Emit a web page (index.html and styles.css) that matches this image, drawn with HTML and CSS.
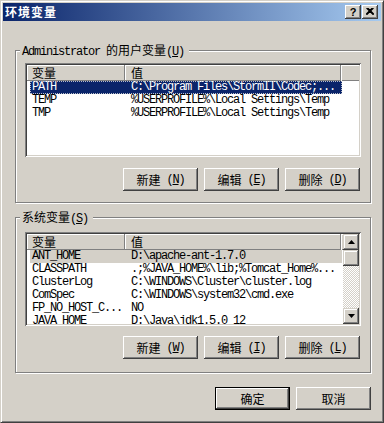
FILE: index.html
```html
<!DOCTYPE html>
<html>
<head>
<meta charset="utf-8">
<link rel="stylesheet" href="styles.css">
</head>
<body>
<div class="window">
  <div class="titlebar">
    <span class="title c">环境变量</span>
    <div class="tbtns">
      <div class="tbtn help">?</div>
      <div class="tbtn close"><svg width="8" height="7" viewBox="0 0 8 7"><path d="M0.5 0 L7.5 7 M1.8 0 L8 6.2 M7.5 0 L0.5 7 M6.2 0 L0 6.2" stroke="#000" stroke-width="1.1" fill="none"/></svg></div>
    </div>
  </div>
  <div class="content">
    <div class="group g1">
      <div class="legend">Administrator <span class="c">的用户变量</span>(<u>U</u>)</div>
      <div class="listview lv1">
        <div class="lv-main">
          <div class="header">
            <div class="hcell hk"><span class="c">变量</span></div>
            <div class="hcell hv"><span class="c">值</span></div>
            <div class="hfill"></div>
          </div>
          <div class="row sel"><div class="cell k">PATH</div><div class="cell v">C:\Program Files\StormII\Codec;...</div></div>
          <div class="row"><div class="cell k">TEMP</div><div class="cell v">%USERPROFILE%\Local Settings\Temp</div></div>
          <div class="row"><div class="cell k">TMP</div><div class="cell v">%USERPROFILE%\Local Settings\Temp</div></div>
        </div>
      </div>
      <div class="btnrow">
        <button class="btn"><span class="c">新建</span>&nbsp;(<u>N</u>)</button>
        <button class="btn"><span class="c">编辑</span>&nbsp;(<u>E</u>)</button>
        <button class="btn"><span class="c">删除</span>&nbsp;(<u>D</u>)</button>
      </div>
    </div>

    <div class="group g2">
      <div class="legend"><span class="c">系统变量</span>(<u>S</u>)</div>
      <div class="listview lv2">
        <div class="lv-main">
          <div class="header">
            <div class="hcell hk"><span class="c">变量</span></div>
            <div class="hcell hv"><span class="c">值</span></div>
            <div class="hfill"></div>
          </div>
          <div class="row inact"><div class="cell k">ANT_HOME</div><div class="cell v">D:\apache-ant-1.7.0</div></div>
          <div class="row"><div class="cell k">CLASSPATH</div><div class="cell v">.;%JAVA_HOME%\lib;%Tomcat_Home%...</div></div>
          <div class="row"><div class="cell k">ClusterLog</div><div class="cell v">C:\WINDOWS\Cluster\cluster.log</div></div>
          <div class="row"><div class="cell k">ComSpec</div><div class="cell v">C:\WINDOWS\system32\cmd.exe</div></div>
          <div class="row"><div class="cell k">FP_NO_HOST_C...</div><div class="cell v">NO</div></div>
          <div class="row"><div class="cell k">JAVA_HOME</div><div class="cell v">D:\Java\jdk1.5.0_12</div></div>
        </div>
        <div class="scrollbar">
          <div class="sb-btn"><svg width="7" height="4" viewBox="0 0 7 4"><path d="M3.5 0 L7 4 L0 4 Z" fill="#000"/></svg></div>
          <div class="sb-btn"></div>
          <div class="sb-track"></div>
          <div class="sb-btn"><svg width="7" height="4" viewBox="0 0 7 4"><path d="M0 0 L7 0 L3.5 4 Z" fill="#000"/></svg></div>
        </div>
      </div>
      <div class="btnrow br2">
        <button class="btn"><span class="c">新建</span>&nbsp;(<u>W</u>)</button>
        <button class="btn"><span class="c">编辑</span>&nbsp;(<u>I</u>)</button>
        <button class="btn"><span class="c">删除</span>&nbsp;(<u>L</u>)</button>
      </div>
    </div>

    <div class="dlgbtns">
      <button class="btn def"><span class="c">确定</span></button>
      <button class="btn"><span class="c">取消</span></button>
    </div>
  </div>
</div>
</body>
</html>
```

FILE: styles.css
```css
* { box-sizing: border-box; }
html, body { margin: 0; padding: 0; background: #d4d0c8; }
body {
  font-family: "Liberation Mono", "Noto Sans CJK SC", monospace;
  font-size: 12px;
  letter-spacing: -1.2px;
  color: #000;
}
.c {
  font-family: "Noto Sans CJK SC", sans-serif;
  font-size: 12px;
  letter-spacing: 0;
}
u { text-underline-offset: 1px; }

.window {
  width: 384px;
  height: 423px;
  border: 1px solid;
  border-color: #d4d0c8 #404040 #404040 #d4d0c8;
  box-shadow: inset 1px 1px #fff, inset -1px -1px #808080;
  padding: 2px;
  background: #d4d0c8;
}
.titlebar {
  height: 18px;
  background: linear-gradient(to right, #0a246a, #a6caf0);
  display: flex;
  align-items: center;
  justify-content: space-between;
  padding-left: 2px;
}
.title {
  color: #fff;
  font-weight: bold;
  letter-spacing: 1px;
  line-height: 18px;
}
.tbtns { display: flex; gap: 1px; margin-right: 3px; }
.tbtn {
  width: 16px;
  height: 14px;
  background: #d4d0c8;
  box-shadow: inset -1px -1px #404040, inset 1px 1px #fff, inset -2px -2px #808080;
  display: flex;
  align-items: center;
  justify-content: center;
}
.help {
  font-family: "Liberation Sans", sans-serif;
  font-weight: bold;
  font-size: 11px;
  letter-spacing: 0;
  line-height: 14px;
  padding-bottom: 1px;
}
.close svg { margin-bottom: 1px; }

.content { padding: 29px 10px 0 12px; }

.group {
  width: 356px;
  border: 1px solid #808080;
  box-shadow: inset 1px 1px #fff, 1px 1px #fff;
  padding: 0 9px 11px 9px;
}
.g2 { margin-top: 14px; padding-bottom: 13px; }
.legend {
  width: fit-content;
  height: 12px;
  line-height: 12px;
  margin: -7px 0 0 -5px;
  padding: 0 5px 0 2px;
  background: #d4d0c8;
  white-space: nowrap;
}

.listview {
  width: 336px;
  height: 94px;
  margin-top: 7px;
  background: #fff;
  box-shadow: inset 1px 1px #808080, inset -1px -1px #fff, inset 2px 2px #404040, inset -2px -2px #d4d0c8;
  padding: 2px;
  overflow: hidden;
  display: flex;
}
.lv2 { margin-top: 9px; }
.lv-main { flex: 1; min-width: 0; overflow: hidden; }

.header { display: flex; height: 16px; background: #d4d0c8; }
.hcell {
  height: 16px;
  line-height: 16px;
  box-shadow: inset -1px -1px #808080, inset 1px 1px #fff;
  white-space: nowrap;
}
.hk { width: 98px; padding-left: 5px; }
.hv { width: 216px; padding-left: 6px; }
.hfill { flex: 1; box-shadow: inset 1px 1px #fff, inset 0 -1px #808080; }

.row {
  display: flex;
  width: 312px;
  height: 13px;
  line-height: 13px;
  margin-left: 3px;
  white-space: nowrap;
}
.cell { overflow: hidden; }
.k { width: 95px; padding-left: 2px; }
.v { width: 217px; padding-left: 6px; }
.row.sel {
  background: #0a246a;
  color: #fff;
  outline: 1px dotted #b8bcc8;
  outline-offset: -1px;
}
.row.inact { background: #d4d0c8; }

.scrollbar {
  width: 16px;
  display: flex;
  flex-direction: column;
  background: repeating-conic-gradient(#fff 0 25%, #d4d0c8 0 50%) 0 0 / 2px 2px;
}
.sb-btn {
  width: 16px;
  height: 16px;
  flex: none;
  background: #d4d0c8;
  box-shadow: inset -1px -1px #404040, inset 1px 1px #d4d0c8, inset -2px -2px #808080, inset 2px 2px #fff;
  display: flex;
  align-items: center;
  justify-content: center;
}
.sb-track { flex: 1; }

.btnrow {
  display: flex;
  justify-content: flex-end;
  gap: 6px;
  margin-top: 11px;
  padding-right: 1px;
}
.br2 { margin-top: 10px; }
.btn {
  width: 75px;
  height: 23px;
  border: 0;
  padding: 0;
  margin: 0;
  background: #d4d0c8;
  color: #000;
  font-family: "Liberation Mono", "Noto Sans CJK SC", monospace;
  font-size: 12px;
  letter-spacing: -1.2px;
  line-height: 12px;
  white-space: nowrap;
  box-shadow: inset -1px -1px #404040, inset 1px 1px #fff, inset -2px -2px #808080, inset 2px 2px #d4d0c8;
  display: flex;
  align-items: center;
  justify-content: center;
}
.btn.def {
  box-shadow: inset 0 0 0 1px #000, inset -2px -2px #404040, inset 2px 2px #fff, inset -3px -3px #808080;
}
.dlgbtns {
  width: 356px;
  display: flex;
  justify-content: flex-end;
  gap: 6px;
  margin-top: 14px;
}
```
